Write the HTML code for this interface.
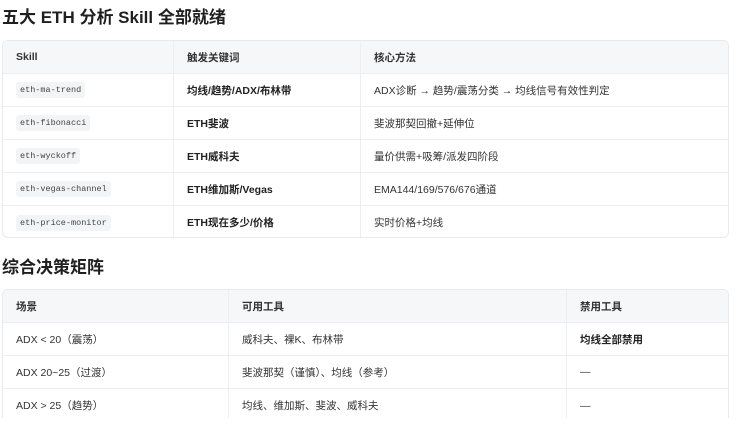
<!DOCTYPE html>
<html><head><meta charset="utf-8"><style>
*{margin:0;padding:0;box-sizing:border-box}
html,body{width:739px;height:431px;overflow:hidden}
body{background:#fff;font-family:"Liberation Sans","Noto Sans CJK SC",sans-serif;color:#333;position:relative}
h2{position:absolute;left:2px;font-size:17px;font-weight:bold;color:#1f1f1f}
.t{position:absolute;border:1px solid #e8eaee;border-radius:6px;overflow:hidden}
.r{position:absolute;left:0;right:0;border-bottom:1px solid #eceef1}
.h{background:#f6f7f9;font-weight:bold;color:#333}
.c{position:absolute;top:0;height:100%;display:flex;align-items:center;padding-left:13px;font-size:10.5px}
.sep{border-left:1px solid #eceef1}
code{font-family:"Liberation Mono",monospace;font-size:8.5px;background:#f3f4f6;color:#444;padding:3px 4px;border-radius:3px}
b{font-weight:bold;color:#222}
</style></head><body>
<h2 style="top:3px">五大 ETH 分析 Skill 全部就绪</h2>
<div class="t" style="left:2px;top:40px;width:727px;height:198px">
 <div class="r h" style="top:0;height:33px"><div class="c" style="left:0;width:170px">Skill</div><div class="c sep" style="left:170px;width:187px">触发关键词</div><div class="c sep" style="left:357px;right:0">核心方法</div></div>
 <div class="r" style="top:33px;height:33px"><div class="c" style="left:0;width:170px"><code>eth-ma-trend</code></div><div class="c sep" style="left:170px;width:187px"><b>均线/趋势/ADX/布林带</b></div><div class="c sep" style="left:357px;right:0">ADX诊断 → 趋势/震荡分类 → 均线信号有效性判定</div></div>
 <div class="r" style="top:66px;height:33px"><div class="c" style="left:0;width:170px"><code>eth-fibonacci</code></div><div class="c sep" style="left:170px;width:187px"><b>ETH斐波</b></div><div class="c sep" style="left:357px;right:0">斐波那契回撤+延伸位</div></div>
 <div class="r" style="top:99px;height:33px"><div class="c" style="left:0;width:170px"><code>eth-wyckoff</code></div><div class="c sep" style="left:170px;width:187px"><b>ETH威科夫</b></div><div class="c sep" style="left:357px;right:0">量价供需+吸筹/派发四阶段</div></div>
 <div class="r" style="top:132px;height:33px"><div class="c" style="left:0;width:170px"><code>eth-vegas-channel</code></div><div class="c sep" style="left:170px;width:187px"><b>ETH维加斯/Vegas</b></div><div class="c sep" style="left:357px;right:0">EMA144/169/576/676通道</div></div>
 <div class="r" style="top:165px;height:33px;border-bottom:none"><div class="c" style="left:0;width:170px"><code>eth-price-monitor</code></div><div class="c sep" style="left:170px;width:187px"><b>ETH现在多少/价格</b></div><div class="c sep" style="left:357px;right:0">实时价格+均线</div></div>
</div>
<h2 style="top:253px">综合决策矩阵</h2>
<div class="t" style="left:2px;top:289px;width:727px;height:129px;border-bottom:none;border-radius:6px 6px 0 0">
 <div class="r h" style="top:0;height:33px"><div class="c" style="left:0;width:225px">场景</div><div class="c sep" style="left:225px;width:338px">可用工具</div><div class="c sep" style="left:563px;right:0">禁用工具</div></div>
 <div class="r" style="top:33px;height:33px"><div class="c" style="left:0;width:225px">ADX &lt; 20（震荡）</div><div class="c sep" style="left:225px;width:338px">威科夫、裸K、布林带</div><div class="c sep" style="left:563px;right:0"><b>均线全部禁用</b></div></div>
 <div class="r" style="top:66px;height:33px"><div class="c" style="left:0;width:225px">ADX 20~25（过渡）</div><div class="c sep" style="left:225px;width:338px">斐波那契（谨慎）、均线（参考）</div><div class="c sep" style="left:563px;right:0">—</div></div>
 <div class="r" style="top:99px;height:33px;border-bottom:none"><div class="c" style="left:0;width:225px">ADX &gt; 25（趋势）</div><div class="c sep" style="left:225px;width:338px">均线、维加斯、斐波、威科夫</div><div class="c sep" style="left:563px;right:0">—</div></div>
</div>
</body></html>
